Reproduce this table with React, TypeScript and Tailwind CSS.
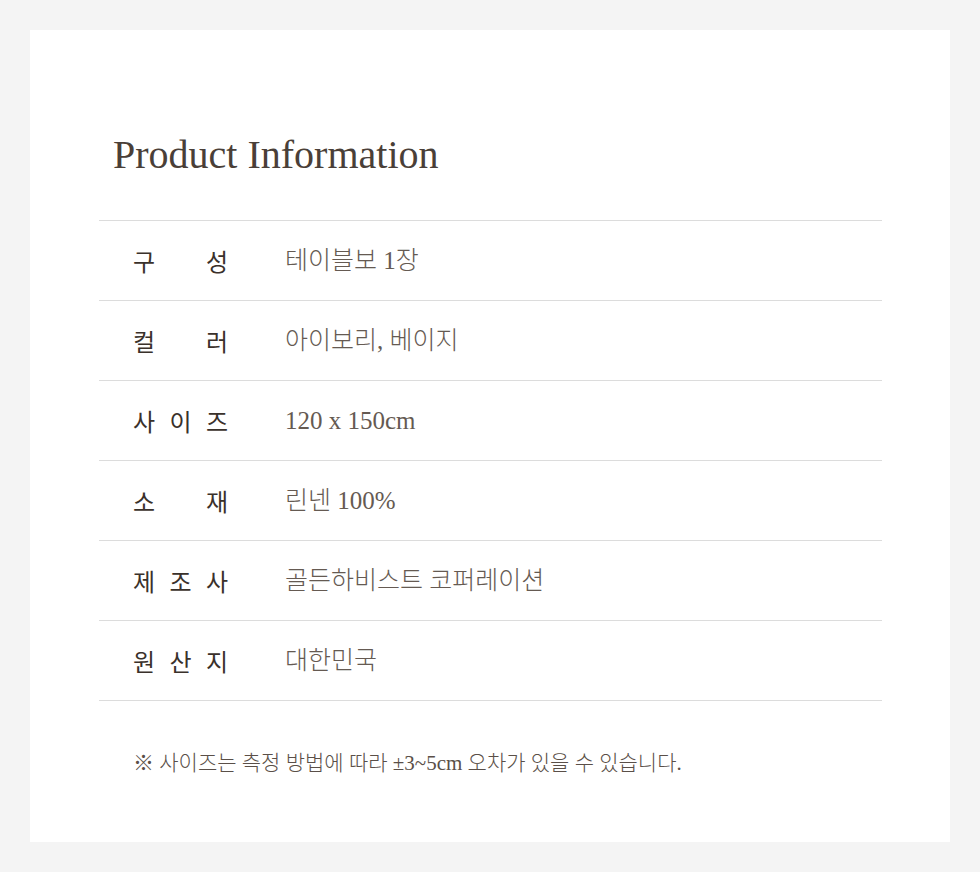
import React from 'react';

const rows = [
  { label: ['구', '성'], value: '테이블보 1장' },
  { label: ['컬', '러'], value: '아이보리, 베이지' },
  { label: ['사', '이', '즈'], value: '120 x 150cm' },
  { label: ['소', '재'], value: '린넨 100%' },
  { label: ['제', '조', '사'], value: '골든하비스트 코퍼레이션' },
  { label: ['원', '산', '지'], value: '대한민국' },
];

export default function App() {
  return (
    <div className="min-h-[872px] bg-[#f4f4f4] p-[30px]">
      <div className="h-[812px] bg-white pl-[69px] pr-[68px] pt-[90px]">
        {/* Title */}
        <h1 className="h-[70px] pl-[14px] text-[40px] leading-[70px] text-[#4a3f38] font-['Liberation_Serif','Noto_Sans_CJK_KR',serif]">
          Product Information
        </h1>

        {/* Spec table */}
        <div className="mt-[30px] border-t border-[#dcdcdc]">
          {rows.map((row, idx) => (
            <div
              key={idx}
              className="flex h-[80px] items-center border-b border-[#dcdcdc] pl-[34px]"
            >
              <div className="flex w-[95px] justify-between text-[24px] font-normal text-[#3a312b] font-['Noto_Sans_CJK_KR',sans-serif]">
                {row.label.map((ch, i) => (
                  <span key={i}>{ch}</span>
                ))}
              </div>
              <div className="ml-[57px] text-[25px] font-light text-[#655a52] font-['Liberation_Serif','Noto_Sans_CJK_KR',serif]">
                {row.value}
              </div>
            </div>
          ))}
        </div>

        {/* Note */}
        <p className="mt-[47px] pl-[34px] text-[21px] leading-[30px] font-light text-[#5a4f48] font-['Liberation_Serif','Noto_Sans_CJK_KR',serif]">
          ※ 사이즈는 측정 방법에 따라 ±3~5cm 오차가 있을 수 있습니다.
        </p>
      </div>
    </div>
  );
}
